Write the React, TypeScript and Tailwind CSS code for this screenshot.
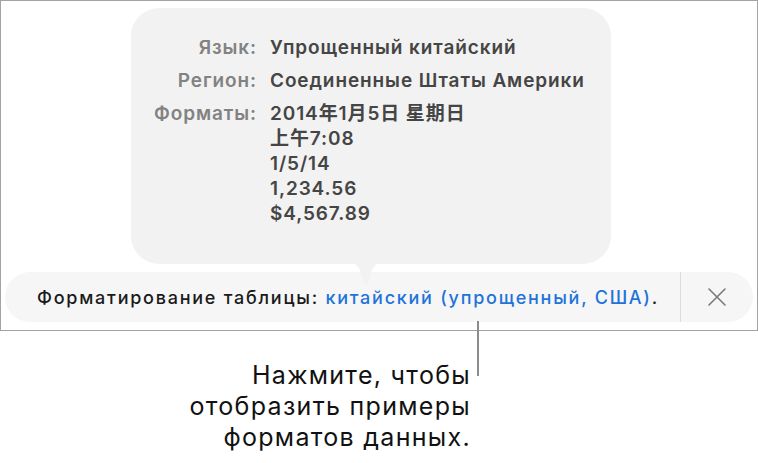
const rows = [
    { label: "Язык:", lines: ["Упрощенный китайский"] },
    { label: "Регион:", lines: ["Соединенные Штаты Америки"] },
    { label: "Форматы:", lines: ["2014年1月5日 星期日", "上午7:08", "1/5/14", "1,234.56", "$4,567.89"] },
];

const FormatPopover = () => (
    <div className="relative ml-[130px] w-[480px] h-[256px] rounded-[28px] bg-[#f2f2f2] pt-[27px]">
        <div className="grid grid-cols-[126px_1fr] gap-x-[13px] gap-y-[8px] text-[19px] font-semibold tracking-[0.9px]">
            {rows.map((row) => (
                <div key={row.label} className="contents">
                    <div className="text-right text-[#828282] leading-[25px]">{row.label}</div>
                    <div className="text-[#454545] leading-[25px]">
                        {row.lines.map((line) => (
                            <div key={line}>{line}</div>
                        ))}
                    </div>
                </div>
            ))}
        </div>
        {/* tail pointing down at the bar */}
        <svg className="absolute left-[216px] top-[254px]" width="38" height="25" viewBox="0 0 38 25">
            <path d="M0 0 C10 0 13 5 16 18 C17 24 21 24 22 18 C25 5 28 0 38 0 Z" fill="#f2f2f2" />
        </svg>
    </div>
);

const CloseIcon = () => (
    <svg width="18" height="18" viewBox="0 0 18 18" fill="none" stroke="#7a7a7a" strokeWidth="1.6" strokeLinecap="round">
        <path d="M1 1 L17 17 M17 1 L1 17" />
    </svg>
);

export default function App() {
    return (
        <div
            className="relative w-[758px] h-[463px] bg-white overflow-hidden"
            style={{ fontFamily: "Inter, 'Noto Sans CJK SC', sans-serif" }}
        >
            <div className="h-[331px] border border-[#a3a3a3] pt-[7px]">
                <FormatPopover />

                <div className="mx-[4px] mt-[8px] h-[50px] rounded-full bg-[#f6f6f6] flex items-center">
                    <div className="flex-1 pl-[32px] text-[18px] font-medium text-[#1a1a1a] tracking-[1.75px]">
                        Форматирование таблицы: <span className="text-[#1f73d9]">китайский (упрощенный, США)</span>.
                    </div>
                    <div className="w-px self-stretch bg-[#dcdcdc]" />
                    <div className="w-[72px] flex justify-center">
                        <CloseIcon />
                    </div>
                </div>
            </div>

            {/* callout leader line */}
            <div className="absolute left-[477px] top-[321px] w-[2px] h-[55px] bg-[#8c8c8c]" />

            <div className="w-[471px] pt-[29px] text-right text-[25px] leading-[31px] tracking-[1.3px] text-[#111111]">
                <div>Нажмите, чтобы</div>
                <div>отобразить примеры</div>
                <div>форматов данных.</div>
            </div>
        </div>
    );
}
